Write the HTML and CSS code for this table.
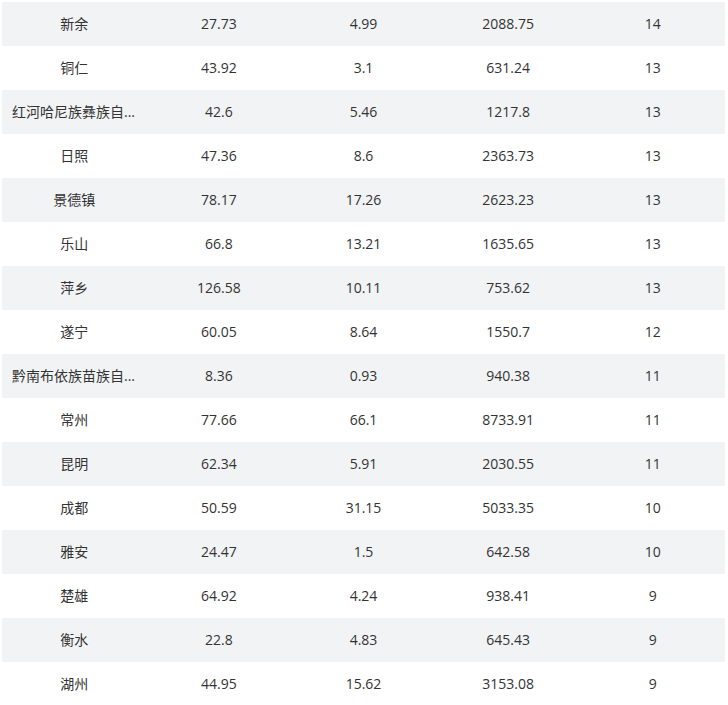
FILE: index.html
```html
<!DOCTYPE html>
<html lang="zh">
<head>
<meta charset="utf-8">
<link rel="stylesheet" href="styles.css">
</head>
<body>
<table class="data">
<tbody>
<tr><td>新余</td><td>27.73</td><td>4.99</td><td>2088.75</td><td>14</td></tr>
<tr><td>铜仁</td><td>43.92</td><td>3.1</td><td>631.24</td><td>13</td></tr>
<tr><td class="left" title="红河哈尼族彝族自治州">红河哈尼族彝族自...</td><td>42.6</td><td>5.46</td><td>1217.8</td><td>13</td></tr>
<tr><td>日照</td><td>47.36</td><td>8.6</td><td>2363.73</td><td>13</td></tr>
<tr><td>景德镇</td><td>78.17</td><td>17.26</td><td>2623.23</td><td>13</td></tr>
<tr><td>乐山</td><td>66.8</td><td>13.21</td><td>1635.65</td><td>13</td></tr>
<tr><td>萍乡</td><td>126.58</td><td>10.11</td><td>753.62</td><td>13</td></tr>
<tr><td>遂宁</td><td>60.05</td><td>8.64</td><td>1550.7</td><td>12</td></tr>
<tr><td class="left" title="黔南布依族苗族自治州">黔南布依族苗族自...</td><td>8.36</td><td>0.93</td><td>940.38</td><td>11</td></tr>
<tr><td>常州</td><td>77.66</td><td>66.1</td><td>8733.91</td><td>11</td></tr>
<tr><td>昆明</td><td>62.34</td><td>5.91</td><td>2030.55</td><td>11</td></tr>
<tr><td>成都</td><td>50.59</td><td>31.15</td><td>5033.35</td><td>10</td></tr>
<tr><td>雅安</td><td>24.47</td><td>1.5</td><td>642.58</td><td>10</td></tr>
<tr><td>楚雄</td><td>64.92</td><td>4.24</td><td>938.41</td><td>9</td></tr>
<tr><td>衡水</td><td>22.8</td><td>4.83</td><td>645.43</td><td>9</td></tr>
<tr><td>湖州</td><td>44.95</td><td>15.62</td><td>3153.08</td><td>9</td></tr>
</tbody>
</table>
</body>
</html>
```
FILE: styles.css
```css
html, body {
  margin: 0;
  background: #ffffff;
}
body {
  padding: 2px 3px 0 2px;
  font-family: "Open Sans", "Noto Sans CJK SC", sans-serif;
  font-size: 14px;
  color: #333333;
}
.data {
  width: 723px;
  border-collapse: collapse;
  table-layout: fixed;
}
.data td {
  height: 44px;
  padding: 0 8px 2px;
  text-align: center;
  vertical-align: middle;
  white-space: nowrap;
  overflow: hidden;
  box-sizing: border-box;
}
.data tr:nth-child(odd) {
  background: #f2f3f5;
}
.data td.left {
  text-align: left;
  padding-left: 10px;
}
```
